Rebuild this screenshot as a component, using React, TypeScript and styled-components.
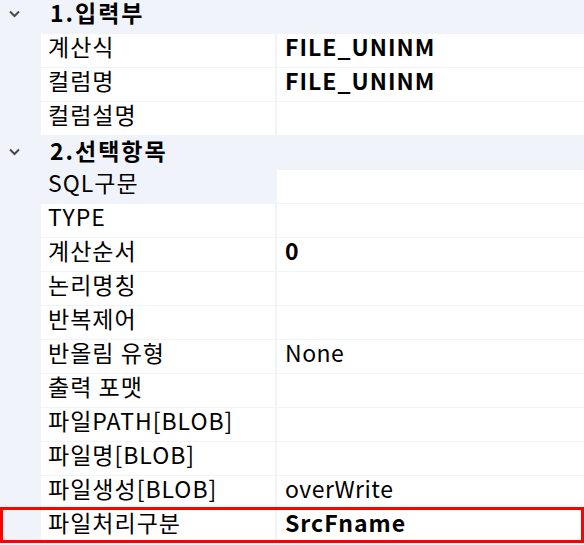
import styled, { createGlobalStyle } from 'styled-components'

const GlobalStyle = createGlobalStyle`
  html, body {
    margin: 0;
    padding: 0;
    background: #f0f4fa;
    overflow: hidden;
  }
  body {
    font-family: 'Noto Sans CJK KR', 'Noto Sans', sans-serif;
    color: #000;
  }
`

const Grid = styled.div`
  width: 584px;
  display: flex;
  flex-direction: column;
  background: #f0f4fa;
`

const CategoryRow = styled.div<{ $pad: number }>`
  display: flex;
  align-items: flex-start;
  height: 33px;
  margin-bottom: 1px;
  padding-top: ${({ $pad }) => $pad}px;
  box-sizing: border-box;
`

const Toggle = styled.div`
  width: 41px;
  flex: none;
  padding-left: 9px;
  padding-top: 10px;
  box-sizing: border-box;
  svg {
    display: block;
  }
`

const CategoryTitle = styled.span`
  font-size: 23px;
  line-height: 24px;
  font-weight: 700;
  letter-spacing: 2px;
  padding-left: 9px;
`

const PropRow = styled.div<{ $selected?: boolean }>`
  display: flex;
  height: 33px;
  margin-bottom: 1px;
  position: relative;
  ${({ $selected }) =>
    $selected &&
    `
    &::after {
      content: '';
      position: absolute;
      top: -3px;
      left: 0;
      right: 0;
      bottom: 0;
      border: 3px solid #ff0000;
      pointer-events: none;
    }
  `}
`

const Gutter = styled.div`
  width: 41px;
  flex: none;
`

const NameCell = styled.div<{ $readOnly?: boolean }>`
  width: 234px;
  flex: none;
  margin-right: 2px;
  background: ${({ $readOnly }) => ($readOnly ? '#f0f4fa' : '#fff')};
  padding-left: 7px;
  box-sizing: border-box;
  font-size: 23px;
  line-height: 24px;
  letter-spacing: 1px;
  white-space: nowrap;
`

const ValueCell = styled.div<{ $bold?: boolean }>`
  flex: 1;
  background: #fff;
  padding-left: 8px;
  box-sizing: border-box;
  font-size: 23px;
  line-height: 24px;
  letter-spacing: ${({ $bold }) => ($bold ? '1px' : '0.5px')};
  font-weight: ${({ $bold }) => ($bold ? 700 : 400)};
  white-space: nowrap;
`

type Prop = { name: string; value?: string; bold?: boolean; readOnly?: boolean; selected?: boolean }
type Category = { title: string; pad: number; props: Prop[] }

const data: Category[] = [
  {
    title: '1.입력부',
    pad: 0,
    props: [
      { name: '계산식', value: 'FILE_UNINM', bold: true },
      { name: '컬럼명', value: 'FILE_UNINM', bold: true },
      { name: '컬럼설명' },
    ],
  },
  {
    title: '2.선택항목',
    pad: 2,
    props: [
      { name: 'SQL구문', readOnly: true },
      { name: 'TYPE' },
      { name: '계산순서', value: '0', bold: true },
      { name: '논리명칭' },
      { name: '반복제어' },
      { name: '반올림 유형', value: 'None' },
      { name: '출력 포맷' },
      { name: '파일PATH[BLOB]' },
      { name: '파일명[BLOB]' },
      { name: '파일생성[BLOB]', value: 'overWrite' },
      { name: '파일처리구분', value: 'SrcFname', bold: true, selected: true },
    ],
  },
]

const Chevron = () => (
  <svg width="11" height="8" viewBox="0 0 11 8">
    <polyline points="1,1.5 5.5,6 10,1.5" fill="none" stroke="#4a4a4a" strokeWidth="2" />
  </svg>
)

const App = () => {
  return (
    <>
      <GlobalStyle />
      <Grid>
        {data.map((cat) => (
          <div key={cat.title}>
            <CategoryRow $pad={cat.pad}>
              <Toggle>
                <Chevron />
              </Toggle>
              <CategoryTitle>{cat.title}</CategoryTitle>
            </CategoryRow>
            {cat.props.map((p) => (
              <PropRow key={p.name} $selected={p.selected}>
                <Gutter />
                <NameCell $readOnly={p.readOnly}>{p.name}</NameCell>
                <ValueCell $bold={p.bold}>{p.value}</ValueCell>
              </PropRow>
            ))}
          </div>
        ))}
      </Grid>
    </>
  )
}

export default App
